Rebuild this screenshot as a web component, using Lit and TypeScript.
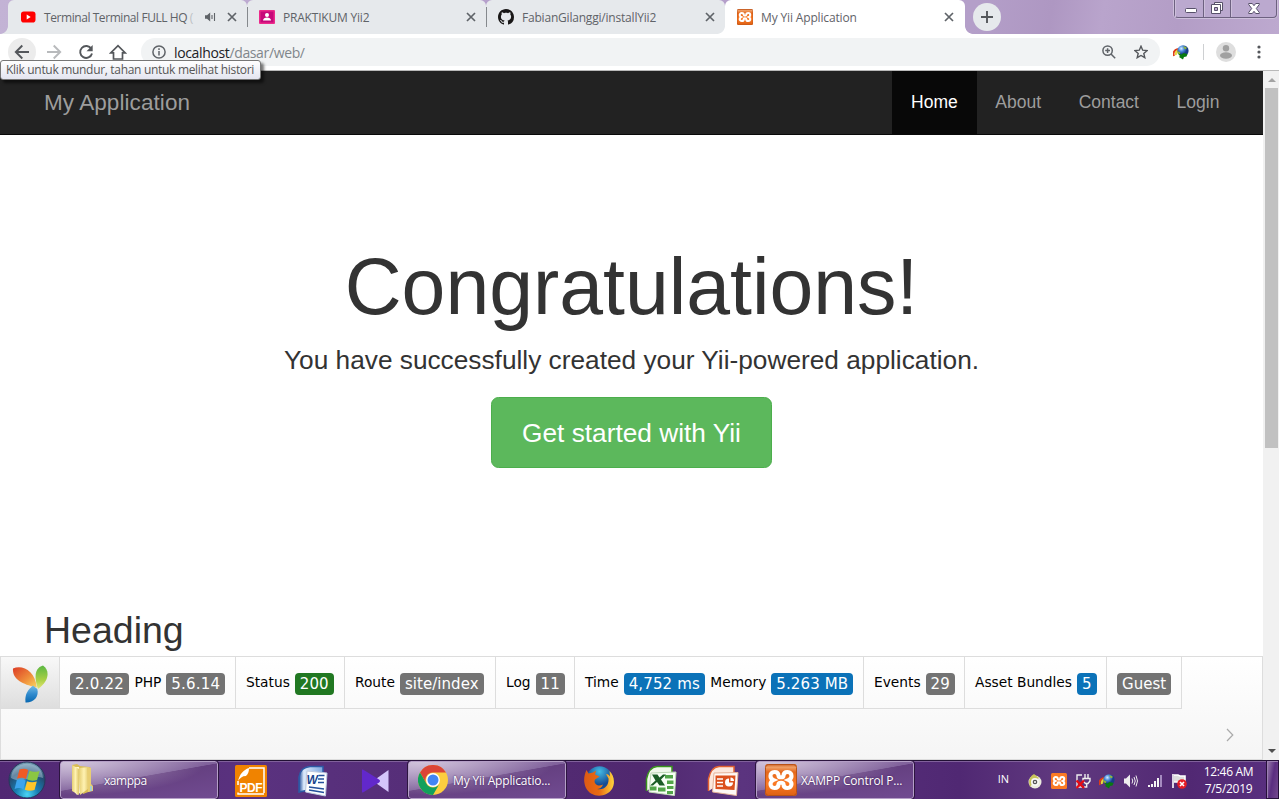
import { LitElement, html, css, svg } from "lit";
import { customElement } from "lit/decorators.js";

const xamppGlyph = svg`<path d="M9.500 8c3.200 0 4 1.800 4 3.700 0 1.300 1 1.600 2.500 1.600s2.500-.3 2.500-1.600c0-1.900.8-3.700 4-3.700 2.700 0 4 1.800 4 3.900 0 2-1.200 3.300-3 4.100 1.800.8 3 2.100 3 4.100 0 2.100-1.300 3.900-4 3.900-3.200 0-4-1.800-4-3.700 0-1.300-1-1.600-2.500-1.600s-2.500.3-2.500 1.600c0 1.900-.8 3.700-4 3.700-2.700 0-4-1.800-4-3.900 0-2 1.200-3.300 3-4.100-1.800-.8-3-2.100-3-4.100 0-2.100 1.300-3.900 4-3.900z" fill="none" stroke="#fff" stroke-width="4.100"/>`;

const icons = {
  youtube: html`<svg width="16" height="16" viewBox="0 0 16 16"><rect x="1" y="2.500" width="14.500" height="11" rx="2.800" fill="#f00"/><path d="M6.700 5.500v5l4-2.500z" fill="#fff"/></svg>`,
  classroom: html`<svg width="16" height="16" viewBox="0 0 16 16"><rect y="1" width="16" height="14" rx="1" fill="#ec2a8b"/><rect x="1.500" y="2.500" width="13" height="11" fill="#c6087a"/><circle cx="8" cy="6" r="2" fill="#fff"/><path d="M4 11.500c0-2 2-3 4-3s4 1 4 3z" fill="#fff"/></svg>`,
  github: html`<svg width="16" height="16" viewBox="0 0 16 16"><path fill="#191717" d="M8 0C3.580 0 0 3.580 0 8c0 3.540 2.290 6.530 5.470 7.590.4.070.55-.17.55-.38 0-.19-.01-.82-.01-1.490-2.010.37-2.530-.49-2.690-.94-.09-.23-.48-.94-.82-1.130-.28-.15-.68-.52-.01-.53.63-.01 1.080.58 1.230.82.72 1.210 1.870.87 2.330.66.070-.52.28-.87.51-1.070-1.780-.2-3.640-.89-3.640-3.950 0-.87.31-1.590.82-2.150-.08-.2-.36-1.020.08-2.120 0 0 .67-.21 2.200.82.64-.18 1.320-.27 2-.27s1.360.09 2 .27c1.530-1.040 2.200-.82 2.200-.82.44 1.100.16 1.920.08 2.120.51.56.82 1.270.82 2.150 0 3.070-1.870 3.750-3.650 3.950.29.25.54.73.54 1.480 0 1.070-.01 1.930-.01 2.200 0 .21.15.46.55.38A8.010 8.010 0 0 0 16 8c0-4.420-3.580-8-8-8z"/></svg>`,
  xampp: (n: number) => html`<svg width=${n} height=${n} viewBox="0 0 32 32"><defs><linearGradient id="xg" x2="0" y2="1"><stop offset="0" stop-color="#c85a1e"/><stop offset=".1" stop-color="#f0a068"/><stop offset=".25" stop-color="#e5681c"/><stop offset=".6" stop-color="#fb7a24"/><stop offset="1" stop-color="#dc6014"/></linearGradient></defs><rect width="32" height="32" rx="3" fill="url(#xg)"/><rect x=".5" y=".5" width="31" height="31" rx="3" fill="none" stroke="#b85218"/>${xamppGlyph}</svg>`,
  xamppTray: html`<svg width="16" height="16" viewBox="0 0 32 32"><rect width="32" height="32" rx="3" fill="#fb7a24"/>${xamppGlyph}</svg>`,
  close: html`<svg width="10" height="10" viewBox="0 0 10 10"><path d="M1 1l8 8M9 1l-8 8" stroke="#5f6368" stroke-width="1.700"/></svg>`,
  speaker: html`<svg width="12" height="10" viewBox="0 0 12 10"><path d="M0 3.200h2L5.200.5v9L2 6.800H0z" fill="#5f6368"/><path d="M7 3v4M9.500 1v8" stroke="#5f6368" stroke-width="1.100"/></svg>`,
  back: html`<svg width="16" height="16" viewBox="0 0 16 16" fill="none" stroke="#54575b" stroke-width="1.900"><path d="M15 8H2M8.300 1.500L1.800 8l6.500 6.500"/></svg>`,
  forward: html`<svg width="16" height="16" viewBox="0 0 16 16" fill="none" stroke="#b8babc" stroke-width="1.900"><path d="M1 8h13M7.700 1.500L14.200 8l-6.500 6.500"/></svg>`,
  reload: html`<svg width="16" height="16" viewBox="0 0 16 16"><path d="M13.300 4.800A6 6 0 1 0 14 9.500" fill="none" stroke="#54575b" stroke-width="1.900"/><path d="M14.700 1v6.200H8.500z" fill="#54575b"/></svg>`,
  home: html`<svg width="18" height="16" viewBox="0 0 18 16"><path d="M1.800 8.800L9 1.700l7.200 7.100h-2.700V15h-9V8.800z" fill="none" stroke="#54575b" stroke-width="1.700"/></svg>`,
  info: html`<svg width="14" height="14" viewBox="0 0 14 14"><circle cx="7" cy="7" r="6.100" fill="none" stroke="#5f6368" stroke-width="1.500"/><path d="M7 6v4.500M7 3.300v1.600" stroke="#5f6368" stroke-width="1.500"/></svg>`,
  zoom: html`<svg width="14" height="14" viewBox="0 0 14 14" fill="none" stroke="#5f6368" stroke-width="1.500"><circle cx="5.600" cy="5.600" r="4.700"/><path d="M9 9l4.200 4.200M3.200 5.600H8M5.600 3.200V8"/></svg>`,
  star: html`<svg width="14" height="14" viewBox="0 0 14 14"><path d="M7 1.200l1.700 4 4.400.4-3.300 2.900 1 4.200L7 10.500l-3.800 2.200 1-4.200L.9 5.600l4.400-.4z" fill="none" stroke="#54575b" stroke-width="1.400"/></svg>`,
  idm: html`<svg width="16" height="15" viewBox="0 0 16 15"><defs><radialGradient id="globe" cx=".35" cy=".3"><stop offset="0" stop-color="#d4ecff"/><stop offset=".5" stop-color="#4a8bdc"/><stop offset="1" stop-color="#173d88"/></radialGradient></defs><path d="M1 11Q-1 6 5 4" stroke="#df3c19" stroke-width="2" fill="none"/><path d="M3 10Q2 7 6 5" stroke="#ead83b" stroke-width="2" fill="none"/><circle cx="10" cy="5.800" r="5.600" fill="url(#globe)"/><path d="M10 1.500q3-.5 4 1.500l-2 1.500zM4.500 6l3 1.500-1 2-2-1z" fill="#8fb53f"/><path d="M5 8.500l3.500 1 2-1.500L14.500 9l-1 2.500-2.500.5-1 2.500-4-2.500 1-1z" fill="#087b10"/></svg>`,
  user: html`<svg width="20" height="20" viewBox="0 0 20 20"><circle cx="10" cy="10" r="10" fill="#dedede"/><circle cx="10" cy="6.200" r="3.200" fill="#a0a0a0"/><ellipse cx="10" cy="13.500" rx="6" ry="3.300" fill="#a0a0a0"/></svg>`,
  yii: html`<svg width="36" height="38" viewBox="0 0 36 38"><defs><linearGradient id="yr" x2="1" y2="1"><stop offset="0" stop-color="#dc3b25"/><stop offset=".6" stop-color="#f0913c"/><stop offset="1" stop-color="#fad661"/></linearGradient><linearGradient id="yg" x2="0" y2="1"><stop offset="0" stop-color="#5ab742"/><stop offset=".6" stop-color="#a8cf45"/><stop offset="1" stop-color="#e4e674"/></linearGradient><linearGradient id="yb" x2="0" y2="1"><stop offset="0" stop-color="#75bce5"/><stop offset=".5" stop-color="#318bce"/><stop offset="1" stop-color="#0868b1"/></linearGradient></defs><path d="M1 3.500C10-.5 23 5 24.800 22.500 14 20 0 16 1 3.500z" fill="url(#yr)"/><path d="M31 .5C38 5 37.500 16 26 24 22 12 22.500 3 31 .5z" fill="url(#yg)"/><path d="M21 20.500l4.300 3.500C27.500 32 21 38 13.500 37.500 12.500 29 16 25 21 20.500z" fill="url(#yb)"/></svg>`,
  windows: html`<svg width="38" height="38" viewBox="0 0 38 38"><defs><radialGradient id="orb" cx=".5" cy=".9" r=".9"><stop offset="0" stop-color="#4ad5f5"/><stop offset=".35" stop-color="#197db2"/><stop offset=".7" stop-color="#234b70"/><stop offset="1" stop-color="#7ba6bc"/></radialGradient></defs><circle cx="19" cy="19" r="18" fill="url(#orb)" stroke="#27375a" stroke-width="1"/><path d="M3 17C4-2 34-2 35 17 24 13 14 24 3 17z" fill="#d5eaf4" opacity=".38"/><path d="M11.500 8.500c3.300-1.200 6-1 8.700.5l-2.200 9c-3.500-1.500-5.500-1.500-9-.3z" fill="#f05a24"/><path d="M21.500 9.700c3.300 1.500 6.500 1.300 10 .2l-2.400 9c-3.300 1.100-6.600 1.100-9.900-.3z" fill="#8bc643"/><path d="M8.800 19c3.300-1.200 6-1 8.900.4l-2.300 9c-3.300-1.700-5.500-1.700-8.800-.4z" fill="#3ba4ed"/><path d="M19 20.200c3.300 1.500 6.500 1.400 9.800.3l-2.300 8.600c-3.300 1-6.600 1-9.700-.4z" fill="#fdc529"/></svg>`,
  folder: html`<svg width="24" height="32" viewBox="0 0 24 32"><defs><linearGradient id="fo"><stop offset="0" stop-color="#e6cf74"/><stop offset=".5" stop-color="#fff2b2"/><stop offset="1" stop-color="#dfc668"/></linearGradient></defs><path d="M1 1l5-1 3 2 9 1 2 1v23l-8 3z" fill="#d9bd55"/><path d="M5 3h3l1 26-3 2-4-5V4z" fill="#fff7ce"/><path d="M1 1l7 4v26l-7-4z" fill="url(#fo)"/><path d="M8 4l10-1v21l-9 7z" fill="url(#fo)"/><path d="M16 3l4 1v16l2 2v5l-5 1z" fill="#e8ce72"/><path d="M20 22v5" stroke="#8fd1f2" stroke-width="1.500"/></svg>`,
  pdf: html`<svg width="32" height="32" viewBox="0 0 32 32"><rect width="32" height="32" rx="1.500" fill="#f08300"/><path d="M3 16C5 9 8 5 14 3c0 4-1 6-3 8-4 0-6 2-8 5z" fill="#fff"/><path d="M14 3h15v25M3 16v4M3 27.500V29h26" fill="none" stroke="#fff" stroke-width="1.500"/><text x="4.500" y="27" font-size="12" font-weight="700" font-family="Liberation Sans" fill="#fff" textLength="23">PDF</text></svg>`,
  word: html`<svg width="32" height="32" viewBox="0 0 32 32"><defs><linearGradient id="wd"><stop offset="0" stop-color="#1c4a98"/><stop offset=".2" stop-color="#dceafb"/><stop offset="1" stop-color="#7ea6de"/></linearGradient></defs><path d="M2 27V12C3 5 7 2 13 1.500h13V22z" fill="url(#wd)" stroke="#2d5aa5" stroke-width="1.500"/><path d="M10 6l20 2-1.500 23-20-4z" fill="#fdfeff" stroke="#bdc9df"/><path d="M21.500 10.500h6M21 14h6M21 17.500h6M12 22l15 2M12 25l15 2.500" stroke="#24509c" stroke-width="1.700"/><text x="9.500" y="19" font-family="Liberation Sans" font-size="12" font-style="italic" font-weight="700" fill="#1b458d">W</text></svg>`,
  kine: html`<svg width="28" height="24" viewBox="0 0 28 24"><path d="M27.500 1v22L12 12z" fill="#d4c5fa"/><path d="M1 .5q1 0 3 1.200L18 10.500q2 1.500 0 3L4 22.300Q2 23.500 1 23.500z" fill="#6228cb"/></svg>`,
  chrome: html`<svg width="30" height="30" viewBox="0 0 30 30"><circle cx="15" cy="15" r="15" fill="#fccd3f"/><path d="M2 7.500A15 15 0 0 1 28 7.500H15a7.500 7.500 0 0 0-6.500 11.300z" fill="#db4437"/><path d="M2 7.500l6.500 11.300a7.500 7.500 0 0 0 13 0L15 30A15 15 0 0 1 2 7.500z" fill="#12a05c"/><circle cx="15" cy="15" r="6.900" fill="#fff"/><circle cx="15" cy="15" r="5.500" fill="#4285f4"/></svg>`,
  firefox: html`<svg width="30" height="30" viewBox="0 0 30 30"><defs><radialGradient id="ffb" cx=".5" cy=".2"><stop offset="0" stop-color="#43bbe5"/><stop offset="1" stop-color="#164c93"/></radialGradient><linearGradient id="ffo"><stop offset="0" stop-color="#dc5a15"/><stop offset=".5" stop-color="#e96a12"/><stop offset="1" stop-color="#ffd43d"/></linearGradient></defs><circle cx="15.500" cy="13.500" r="13.300" fill="url(#ffb)"/><path d="M2.500 4l2 3.500 4.500-1 3-2-1 4 4.500 2-4.500 3c-2 4 3 8 8 5-1 3-3.500 4.500-6 4.500 8 1.500 12-4 11.500-10.500L22 8c2 0 3 1 4 2.500L25.500 5C30 9 31.500 17 28 23 22 32 7 32 2 22-1 16 0 9 2.500 4z" fill="url(#ffo)"/></svg>`,
  excel: html`<svg width="32" height="32" viewBox="0 0 32 32"><path d="M1.500 26V14C3 6 6 2 12 1.500h15V10" fill="#f1f8eb" stroke="#3a941d" stroke-width="1.500"/><path d="M6 8l25-1-1.500 23.500L4 27z" fill="#f7fff4" stroke="#bdd6b4"/><path d="M20 10h8v3.500h-8zM22 15.500h6.500V19H22zM22 21h6.500v3H22zM5 21.500h6.500v4H5zM13 22.500h7.500v4H13zM22 26h6v3h-6z" fill="#52a548"/><path d="M7 9.500h5.500l2 3 3.500-3h3l-5 5 4 6h-5.500l-2.500-3.500-4 3.500H5l5.500-5z" fill="#1b5d25"/></svg>`,
  ppt: html`<svg width="32" height="32" viewBox="0 0 32 32"><path d="M1.500 26V14C3 6 6 2 12 1.500h15V10" fill="#fce8dd" stroke="#e06030" stroke-width="1.500"/><path d="M7 8l24-.5-1.500 23L5.500 27z" fill="#fff9f5" stroke="#e5b198"/><path d="M8.500 10.500h20L27.500 25l-19-1z" fill="#db501d"/><path d="M10 14h6M10 17.500h6M10 21h6" stroke="#fff" stroke-width="1.700"/><path d="M22 13.500a4 4 0 1 0 4 4h-4z" fill="#fff"/><path d="M23.500 12.500a3.500 3.500 0 0 1 3.500 3.500h-3.500z" fill="#fff"/></svg>`,
  disc: html`<svg width="14" height="16" viewBox="0 0 14 16"><circle cx="7" cy="9" r="6.500" fill="#ececdf"/><path d="M2 14Q-1 5 6 1l5 4-5 3z" fill="#c9c45b"/><circle cx="7" cy="9" r="4" fill="#f7f7f7"/><circle cx="7" cy="9" r="2.300" fill="#555"/><circle cx="7" cy="9" r="1" fill="#fff"/></svg>`,
  power: html`<svg width="16" height="16" viewBox="0 0 16 16"><path d="M7 2H2v12h5M10 1v4M13 1v4M8 5.500h7V8l-2 2.500h-2.500L8 8zM11.700 11v3H9" stroke="#eee" fill="none" stroke-width="1.400"/><path d="M1.500 7.500L9 15M9 7.500L1.500 15" stroke="#e80b13" stroke-width="2.400"/></svg>`,
  volume: html`<svg width="16" height="16" viewBox="0 0 16 16"><path d="M1 5.500h2l4-4v13l-4-4H1z" fill="#eee"/><path d="M9 5.500q1.500 2.500 0 5M11 4q2.500 4 0 8M13 2.500q3 5.500 0 11" fill="none" stroke="#eee"/></svg>`,
  signal: html`<svg width="16" height="14" viewBox="0 0 16 14"><path d="M1 11h2v2H1zM4 10h2v3H4zM7 7h2v6H7zM10 4h2v9h-2z" fill="#f4f4f4"/><path d="M13 1h2v12h-2z" fill="#a58bc0"/></svg>`,
  flag: html`<svg width="16" height="16" viewBox="0 0 16 16"><path d="M2 1v14M3 2h4l2 1h5v7H8L6 9H3" stroke="#fff" stroke-width="1.600" fill="#ddd"/><circle cx="11" cy="11" r="4.800" fill="#e61d25"/><path d="M9 9l4 4M13 9l-4 4" stroke="#fff" stroke-width="1.600"/></svg>`,
};

const tabs = [
  { icon: icons.youtube, title: "Terminal Terminal FULL HQ", audio: true },
  { icon: icons.classroom, title: "PRAKTIKUM Yii2" },
  { icon: icons.github, title: "FabianGilanggi/installYii2" },
  { icon: icons.xampp(16), title: "My Yii Application", active: true },
];

const debugBlocks = [
  { cls: "w-version", parts: [["", "2.0.22", ""], ["PHP", "5.6.14", ""]] },
  { cls: "w-status", parts: [["Status", "200", "green"]] },
  { cls: "w-route", parts: [["Route", "site/index", ""]] },
  { cls: "w-log", parts: [["Log", "11", ""]] },
  { cls: "w-time", parts: [["Time", "4,752 ms", "blue"], ["Memory", "5.263 MB", "blue"]] },
  { cls: "w-events", parts: [["Events", "29", ""]] },
  { cls: "w-assets", parts: [["Asset Bundles", "5", "blue"]] },
  { cls: "w-guest", parts: [["", "Guest", ""]] },
];

@customElement("browser-chrome")
export class BrowserChrome extends LitElement {
  static styles = css`
    :host { display: block; position: relative; height: 71px; font-family: "Open Sans", "Noto Sans", sans-serif; color: #5f6368; }
    * { box-sizing: border-box; }
    svg { display: block; flex: none; }
    .strip { height: 34px; display: flex; padding-left: 8px; background: linear-gradient(100deg, #c3b3d5 0, #b59fcb 40%, #b49fc9 76%, #ae97c2 82%, #b9a4cc 86%, #b39dc6 92%, #bda9cf 100%); }
    .tab { position: relative; width: 239px; height: 34px; display: flex; align-items: center; background: #e6e9ec; border-radius: 6px 6px 0 0; padding: 0 10px 0 12px; font-size: 12px; letter-spacing: -0.2px; }
    .tab + .tab:not(.active)::before { content: ""; position: absolute; left: 0; top: 7px; width: 1px; height: 20px; background: #85898d; }
    .tab:first-child::after, .tab.active::after { content: ""; position: absolute; left: -8px; bottom: 0; width: 8px; height: 8px; background: radial-gradient(circle at 0 0, transparent 7.500px, #e6e9ec 8.200px); }
    .tab.active { width: 240px; background: #fff; padding-right: 11px; letter-spacing: -0.15px; }
    .tab.active::after { background: radial-gradient(circle at 0 0, transparent 7.500px, #fff 8.200px); }
    .tab.playing { letter-spacing: -0.43px; }
    .flare { width: 8px; height: 8px; align-self: flex-end; background: radial-gradient(circle at 100% 0, transparent 7.500px, #fff 8.200px); }
    .title { flex: 1; margin-left: 8px; white-space: nowrap; }
    .fade { opacity: .3; }
    .audio { margin: 0 10px 0 6px; }
    .plus { width: 28px; height: 28px; border-radius: 50%; background: #e6e9ec; margin: 3px 0 0; display: grid; place-items: center; }
    .controls { margin-left: auto; margin-right: 2px; height: 18px; width: 103px; display: grid; grid-template-columns: 28px 27px 1fr; border: 1px solid #6d6180; border-top: 0; border-radius: 0 0 4px 4px; box-shadow: 0 0 0 1px #cdbfdb; background: #bba9cf; }
    .controls span { display: grid; place-items: center; padding-bottom: 1px; border-left: 1px solid #6d6180; box-shadow: inset 1px 0 #cdbfdb; }
    .controls span:first-child { border: 0; padding: 4px 0 0 3px; }
    .bar { height: 37px; background: #fff; display: flex; align-items: center; border-bottom: 1px solid #b9b9b9; }
    .nav { display: grid; place-items: center; width: 28px; height: 28px; border-radius: 50%; margin-right: 4px; }
    .nav.hover { background: #ececec; margin-left: 8px; }
    .omni { margin-left: 4.500px; width: 1019px; height: 28px; border-radius: 14px; background: #f1f3f4; display: flex; align-items: center; padding: 0 11.500px 0 11px; font-size: 14px; }
    .url { margin-left: 8.500px; flex: 1; letter-spacing: -0.36px; color: #80868b; }
    .host { color: #202124; }
    .star { margin-left: 18px; }
    .idm { margin-left: 13.500px; }
    .rule { width: 1px; height: 16px; background: #ced0d2; margin: 0 12px 0 14px; }
    .dots { margin-left: 21px; }
    .tip { position: absolute; z-index: 3; left: 0; top: 60px; width: 261px; height: 20px; border: 1px solid #767676; border-radius: 3px; background: linear-gradient(#fff, #e4e5f0); box-shadow: 3px 3px 3px rgba(0, 0, 0, .55); font-size: 12px; line-height: 18px; padding-left: 5px; letter-spacing: -0.31px; white-space: nowrap; color: #575757; }
  `;
  render() {
    return html`
      <div class="strip">
        ${tabs.map((t) => html`<div class="tab ${t.active ? "active" : ""} ${t.audio ? "playing" : ""}">${t.icon}<span class="title">${t.title}${t.audio ? html`<span class="fade"> (</span>` : ""}</span>${t.audio ? html`<span class="audio">${icons.speaker}</span>` : ""}${icons.close}</div>`)}
        <i class="flare"></i>
        <div class="plus"><svg width="14" height="14" viewBox="0 0 14 14"><path d="M7 1v12M1 7h12" stroke="#54575b" stroke-width="1.900"/></svg></div>
        <div class="controls">
          <span><svg width="12" height="5" viewBox="0 0 12 5"><rect x=".5" y=".5" width="11" height="4" rx="1" fill="#fff" stroke="#57506a"/></svg></span>
          <span><svg width="12" height="12" viewBox="0 0 12 12" fill="#fff" stroke="#57506a"><path d="M3.500.5h8v8h-3v-5h-5z"/><path fill-rule="evenodd" d="M.5 2.500h9v9h-9zM3.500 5.500h3v3h-3z"/></svg></span>
          <span><svg width="12" height="11" viewBox="0 0 12 11"><path d="M.7.500h3.600L6 2.700 7.700.500h3.600v1L8.300 5.500l3 4v1H7.700L6 8.300 4.300 10.500H.7v-1l3-4-3-4z" fill="#fff" stroke="#57506a"/></svg></span>
        </div>
      </div>
      <div class="bar">
        <span class="nav hover">${icons.back}</span><span class="nav">${icons.forward}</span><span class="nav">${icons.reload}</span><span class="nav">${icons.home}</span>
        <div class="omni">${icons.info}<span class="url"><span class="host">localhost</span>/dasar/web/</span>${icons.zoom}<span class="star">${icons.star}</span></div>
        <span class="idm">${icons.idm}</span><i class="rule"></i>${icons.user}
        <svg class="dots" width="4" height="14" viewBox="0 0 4 14" fill="#54575b"><circle cx="2" cy="2" r="1.600"/><circle cx="2" cy="7" r="1.600"/><circle cx="2" cy="12" r="1.600"/></svg>
      </div>
      <div class="tip">Klik untuk mundur, tahan untuk melihat histori</div>
    `;
  }
}

@customElement("yii-page")
export class YiiPage extends LitElement {
  static styles = css`
    :host { display: flex; height: 689px; background: #fff; font-family: "Liberation Sans", Arial, sans-serif; color: #333; overflow: hidden; }
    * { box-sizing: border-box; }
    svg { display: block; }
    .page { width: 1263px; height: 689px; display: flex; flex-direction: column; }
    .navbar { height: 64px; background: #222; border-bottom: 1px solid #080808; display: flex; justify-content: space-between; padding: 0 24.800px 0 44px; color: #9d9d9d; font-size: 17.500px; line-height: 25px; }
    .brand { font-size: 22.500px; padding-top: 19px; letter-spacing: .07px; }
    .links { display: flex; }
    .link { padding: 19px 18.800px 0; }
    .link.on { color: #fff; background: #080808; }
    .jumbo { height: 462px; padding-top: 109px; display: flex; flex-direction: column; align-items: center; }
    .h1 { font-size: 78.750px; line-height: 87px; margin: 0; font-weight: 400; }
    .lead { font-size: 26.250px; line-height: 37px; margin: 11px 0 18px; }
    .cta { width: 281px; height: 71px; background: #5cb85c; border: 1px solid #4cae4c; border-radius: 7.500px; color: #fff; font-size: 26.250px; line-height: 71px; text-align: center; }
    .h2 { margin: 0 44px; height: 59px; padding-top: 12px; font-size: 37.500px; line-height: 42px; font-weight: 400; }
    .debug { height: 104px; border: 1px solid #ddd; background: linear-gradient(#fff, #f5f5f5); font-family: "DejaVu Sans", Verdana, sans-serif; font-size: 13.750px; color: #000; }
    .blocks { display: flex; height: 52px; }
    .block { border-right: 1px solid #ddd; border-bottom: 1px solid #ddd; height: 52px; padding: 0 10px; display: flex; align-items: flex-start; white-space: nowrap; }
    .logo { width: 59px; padding: 8px 11px; background: linear-gradient(#f8f8f8, #dedede); }
    .w-version { width: 176px; } .w-status { width: 109px; } .w-route { width: 151px; } .w-log { width: 79px; }
    .w-time { width: 289px; } .w-events { width: 101px; } .w-assets { width: 142px; } .w-guest { width: 75px; }
    .name { margin-top: 16px; line-height: 18px; }
    .part { display: flex; flex: none; gap: 5px; }
    .part + .part { margin-left: 5.500px; }
    .badge { margin-top: 16px; height: 22px; line-height: 22px; padding: 0 5px; border-radius: 4px; background: #737373; color: #fff; font-size: 15px; letter-spacing: .05px; }
    .w-version .badge { letter-spacing: .2px; }
    .w-time .badge { letter-spacing: .13px; }
    .badge.green { background: #217822; } .badge.blue { background: #0b72b8; }
    .more { height: 50px; display: flex; justify-content: flex-end; padding: 19px 28px 0 0; }
    .scroll { width: 16px; background: #f1f1f1; display: flex; flex-direction: column; align-items: center; padding: 7px 0 7px 1px; }
    .thumb { width: 13px; height: 360px; background: #c1c1c1; margin-top: 6px; }
    .down { margin-top: auto; }
  `;
  render() {
    return html`
      <div class="page">
        <div class="navbar"><span class="brand">My Application</span><div class="links"><span class="link on">Home</span><span class="link">About</span><span class="link">Contact</span><span class="link">Login</span></div></div>
        <div class="jumbo"><h1 class="h1">Congratulations!</h1><p class="lead">You have successfully created your Yii-powered application.</p><div class="cta">Get started with Yii</div></div>
        <h2 class="h2">Heading</h2>
        <div class="debug">
          <div class="blocks"><div class="block logo">${icons.yii}</div>
            ${debugBlocks.map((b) => html`<div class="block ${b.cls}">${b.parts.map(([n, v, c]) => html`<div class="part">${n ? html`<span class="name">${n}</span>` : ""}<span class="badge ${c}">${v}</span></div>`)}</div>`)}
          </div>
          <div class="more"><svg width="8" height="14" viewBox="0 0 8 14"><path d="M1 1l5.800 6L1 13" fill="none" stroke="#aaa" stroke-width="1.200"/></svg></div>
        </div>
      </div>
      <div class="scroll"><svg width="8" height="4" viewBox="0 0 8 4"><path d="M0 4l4-4 4 4z" fill="#a3a3a3"/></svg><div class="thumb"></div><svg class="down" width="8" height="4" viewBox="0 0 8 4"><path d="M0 0l4 4 4-4z" fill="#505050"/></svg></div>
    `;
  }
}

@customElement("task-bar")
export class TaskBar extends LitElement {
  static styles = css`
    :host { display: flex; height: 39px; color: #fff; font: 12px "Open Sans", "Noto Sans", sans-serif; background: linear-gradient(#211034 0 1px, #80609b 1px 2px, transparent 2px), linear-gradient(90deg, #512873, #5a327f 20%, #50286f 50%, #5b347f 58%, #502873 75%, #60397f 83%, #512873 93%, #593080); overflow: hidden; }
    * { box-sizing: border-box; }
    svg { display: block; flex: none; }
    .start { width: 60px; padding: 1px 0 0 8px; }
    .task { width: 158px; height: 38px; margin-top: 1px; display: flex; align-items: center; border: 1px solid #b59fc7; outline: 1px solid #2c153f; outline-offset: 0; border-radius: 3px; background: radial-gradient(ellipse at 10% 0, rgba(255, 255, 255, .5), transparent 65%), linear-gradient(170deg, #a58bba 0, #80619b 45%, #654081 46%, #714b91 100%); padding: 0 8px 0 9px; letter-spacing: -.16px; white-space: nowrap; text-shadow: 0 0 2px #3c1857; }
    .task svg { margin-right: 5px; }
    .task.folder { letter-spacing: -.45px; }
    .task.folder svg { margin: 0 9px 0 1px; }
    .task.xampp { padding-left: 8px; } .task.xampp svg { margin-right: 4px; }
    .pins { display: flex; margin: 2px 2px 0; }
    .pin { width: 62px; height: 37px; display: grid; place-items: center; }
    .tray { margin-left: auto; display: flex; align-items: center; padding-top: 3px; }
    .lang { font-size: 11px; letter-spacing: -.1px; margin-right: 14px; margin-top: -6px; }
    .cell { width: 24px; display: grid; place-items: center; }
    .clock { width: 75px; text-align: center; line-height: 17px; letter-spacing: -.3px; margin-top: -2px; white-space: nowrap; }
    .desk { width: 13px; height: 39px; margin-top: -3px; background: linear-gradient(100deg, #9b80ae, #5a2d80 50%, #73498e); border: 1px solid #26103a; box-shadow: inset 1px 1px #9c80b3; }
  `;
  render() {
    return html`
      <div class="start">${icons.windows}</div>
      <div class="task folder">${icons.folder}<span>xamppa</span></div>
      <div class="pins"><span class="pin">${icons.pdf}</span><span class="pin">${icons.word}</span><span class="pin">${icons.kine}</span></div>
      <div class="task">${icons.chrome}<span>My Yii Applicatio...</span></div>
      <div class="pins"><span class="pin">${icons.firefox}</span><span class="pin">${icons.excel}</span><span class="pin">${icons.ppt}</span></div>
      <div class="task xampp">${icons.xampp(32)}<span>XAMPP Control P...</span></div>
      <div class="tray"><span class="lang">IN</span>
        ${[icons.disc, icons.xamppTray, icons.power, icons.idm, icons.volume, icons.signal, icons.flag].map((i) => html`<span class="cell">${i}</span>`)}
        <div class="clock">12:46 AM<br />7/5/2019</div><div class="desk"></div>
      </div>
    `;
  }
}

@customElement("app-root")
export class AppRoot extends LitElement {
  static styles = css`:host { display: block; width: 1279px; height: 799px; overflow: hidden; }`;
  render() {
    return html`<browser-chrome></browser-chrome><yii-page></yii-page><task-bar></task-bar>`;
  }
}
